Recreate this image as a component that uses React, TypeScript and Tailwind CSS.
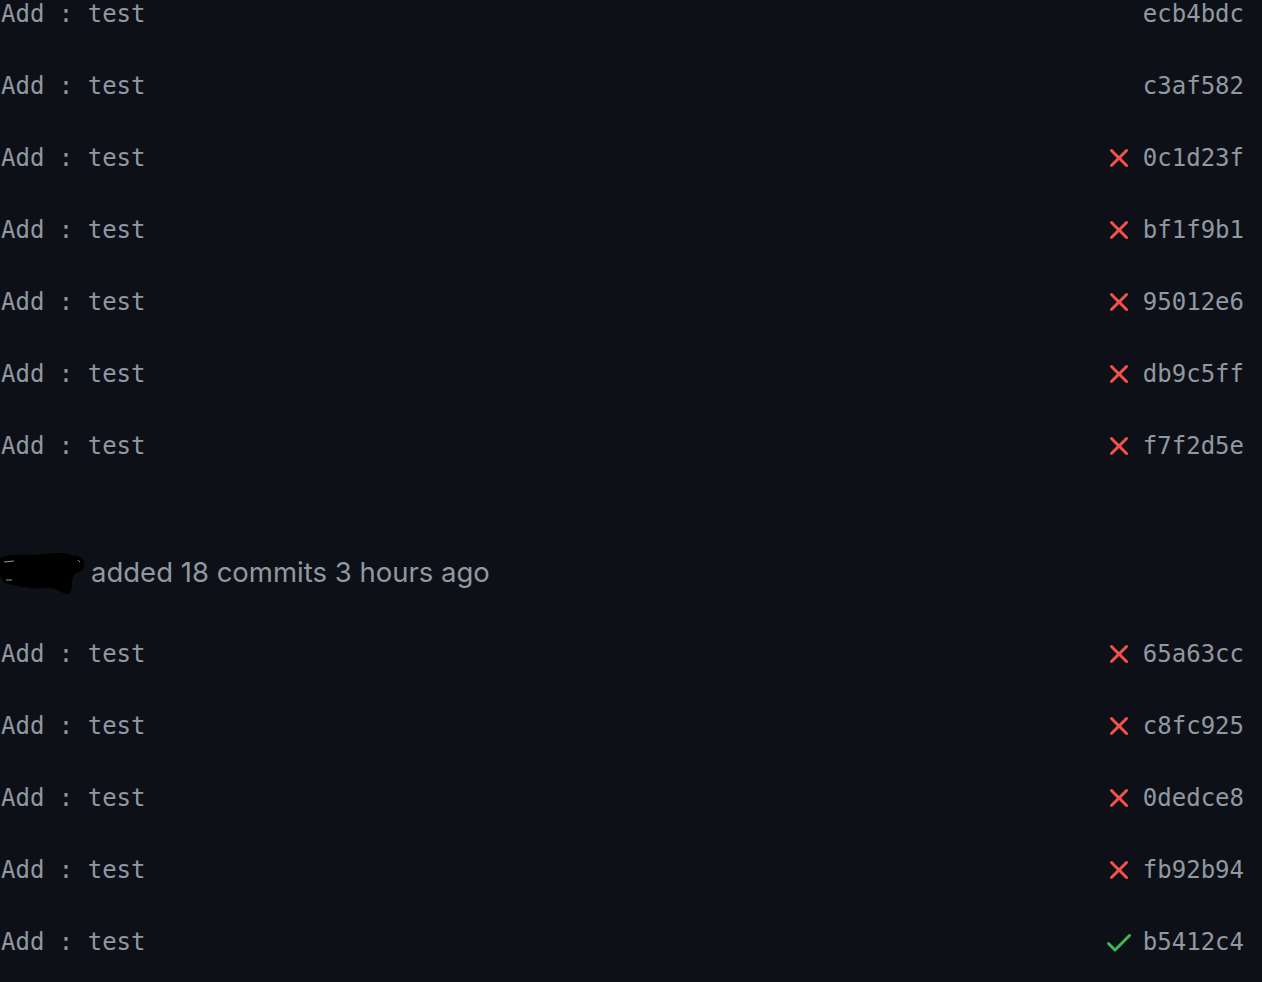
import React from "react";

type Status = "none" | "fail" | "ok";

const firstGroup: { hash: string; status: Status }[] = [
  { hash: "ecb4bdc", status: "none" },
  { hash: "c3af582", status: "none" },
  { hash: "0c1d23f", status: "fail" },
  { hash: "bf1f9b1", status: "fail" },
  { hash: "95012e6", status: "fail" },
  { hash: "db9c5ff", status: "fail" },
  { hash: "f7f2d5e", status: "fail" },
];

const secondGroup: { hash: string; status: Status }[] = [
  { hash: "65a63cc", status: "fail" },
  { hash: "c8fc925", status: "fail" },
  { hash: "0dedce8", status: "fail" },
  { hash: "fb92b94", status: "fail" },
  { hash: "b5412c4", status: "ok" },
];

function XIcon() {
  return (
    <svg width="32" height="32" viewBox="0 0 16 16" fill="#f85149">
      <path d="M3.72 3.72a.75.75 0 0 1 1.06 0L8 6.94l3.22-3.22a.749.749 0 0 1 1.275.326.749.749 0 0 1-.215.734L9.06 8l3.22 3.22a.749.749 0 0 1-.326 1.275.749.749 0 0 1-.734-.215L8 9.06l-3.22 3.22a.751.751 0 0 1-1.042-.018.751.751 0 0 1-.018-1.042L6.94 8 3.72 4.78a.75.75 0 0 1 0-1.06Z" />
    </svg>
  );
}

function CheckIcon() {
  return (
    <svg width="32" height="32" viewBox="0 0 16 16" fill="#3fb950">
      <path d="M13.78 4.22a.75.75 0 0 1 0 1.06l-7.25 7.25a.75.75 0 0 1-1.06 0L2.22 9.28a.751.751 0 0 1 .018-1.042.751.751 0 0 1 1.042-.018L6 10.94l6.72-6.72a.75.75 0 0 1 1.06 0Z" />
    </svg>
  );
}

function CommitRow({ hash, status }: { hash: string; status: Status }) {
  return (
    <div className="flex h-[72px] items-center justify-between pl-px pr-[18px] font-['DejaVu_Sans_Mono',monospace] text-[24px] text-[#9198a1]">
      <span>Add : test</span>
      <div className="flex items-center gap-2">
        {status === "fail" && <XIcon />}
        {status === "ok" && <CheckIcon />}
        <span>{hash}</span>
      </div>
    </div>
  );
}

function Scribble() {
  return (
    <svg width="86" height="48" viewBox="0 0 86 48" className="shrink-0">
      <path
        d="M0 10 C12 4 30 8 48 6 C58 5 66 4 72 8 C78 6 84 10 84 16 C86 22 78 24 74 26 C70 36 74 44 68 46 C60 46 56 38 46 40 C34 42 20 38 8 36 C2 34 0 28 0 22 Z"
        fill="#000"
      />
      <path d="M4 14 L14 13" stroke="#9198a1" strokeWidth="1.2" />
      <path d="M6 32 L12 32" stroke="#9198a1" strokeWidth="1" />
      <path d="M78 12 L80 14" stroke="#9198a1" strokeWidth="1" />
    </svg>
  );
}

export default function App() {
  return (
    <div className="h-[982px] w-full overflow-hidden bg-[#0d1117]">
      <div className="-mt-[22px]">
        {firstGroup.map((c) => (
          <CommitRow key={c.hash} hash={c.hash} status={c.status} />
        ))}
        <div className="flex h-[136px] items-start pt-[72px]">
          <div className="-mt-[6px]">
            <Scribble />
          </div>
          <span className="ml-[5px] font-['Inter',sans-serif] text-[27.5px] leading-[36px] text-[#9198a1]">
            added 18 commits 3 hours ago
          </span>
        </div>
        {secondGroup.map((c) => (
          <CommitRow key={c.hash} hash={c.hash} status={c.status} />
        ))}
      </div>
    </div>
  );
}
